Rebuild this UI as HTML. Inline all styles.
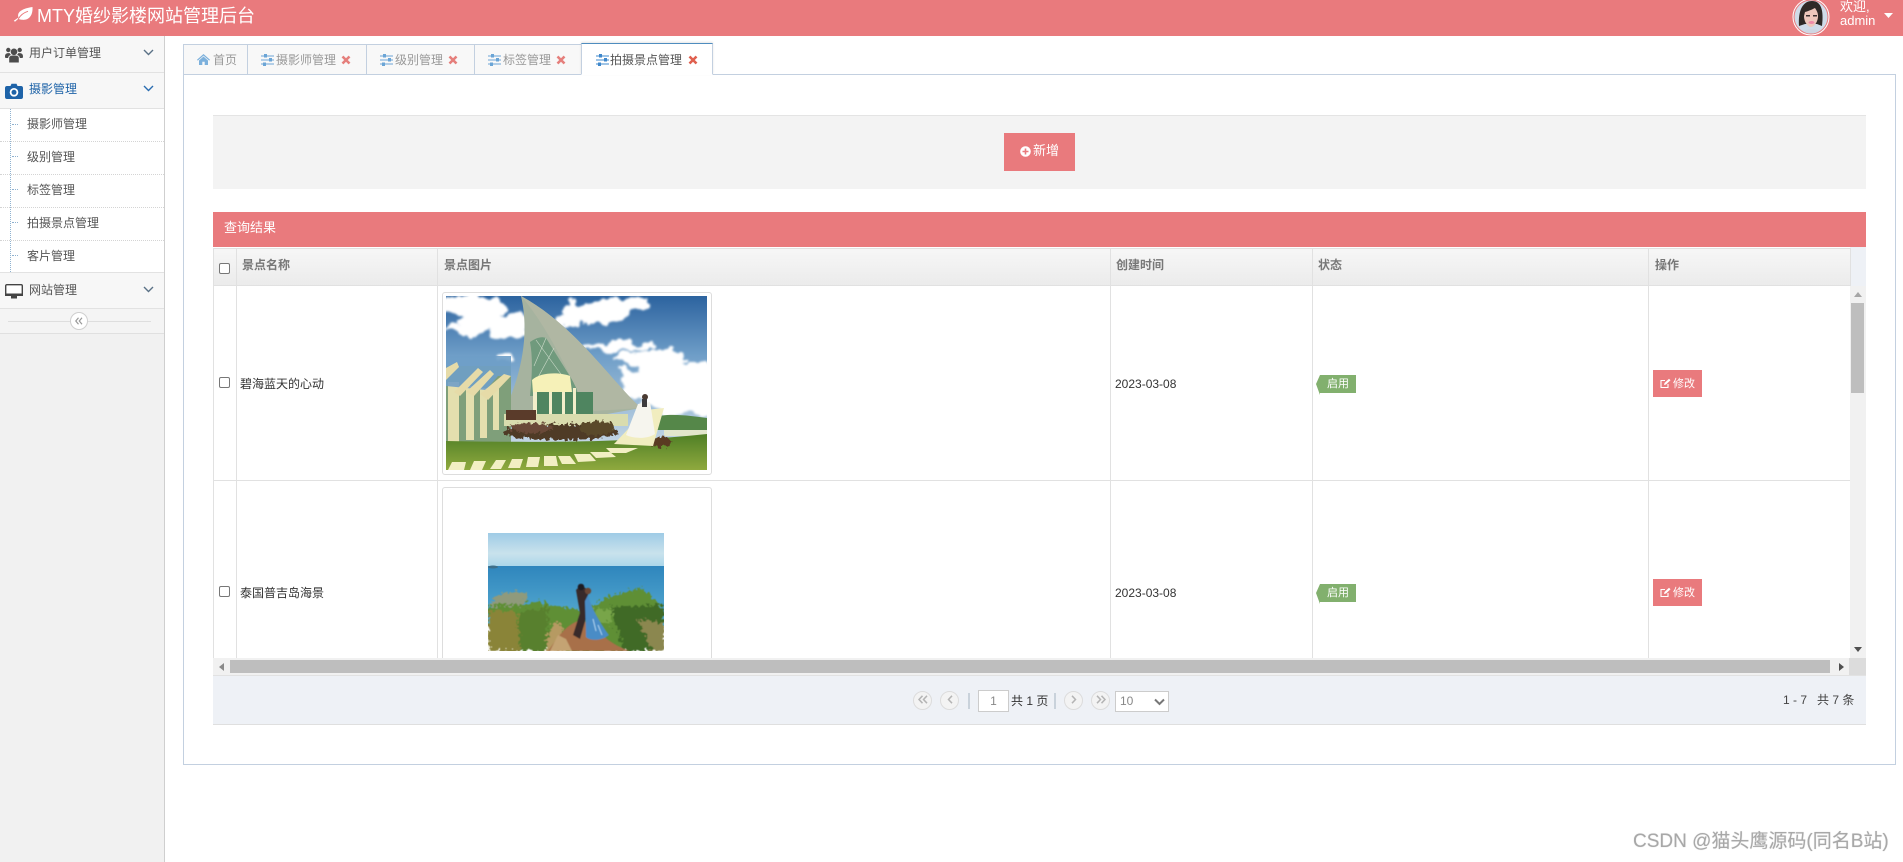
<!DOCTYPE html>
<html lang="zh-CN">
<head>
<meta charset="utf-8">
<title>MTY婚纱影楼网站管理后台</title>
<style>
html,body{margin:0;padding:0;width:1903px;height:862px;overflow:hidden;background:#fff}
body{font-family:"Liberation Sans","Noto Sans CJK SC",sans-serif;font-size:12px;color:#333;position:relative}
.a{position:absolute;box-sizing:border-box}
.t{position:absolute;white-space:nowrap;line-height:16px;height:16px}
svg{position:absolute;display:block}
.menu{left:0;width:164px;background:#f7f7f7;border-bottom:1px solid #e2e2e2}
.sub{left:0;width:164px;height:33px;background:#fff;border-bottom:1px dotted #d4d4d4}
.tab{top:44px;height:31px;background:#f8f8f8;border:1px solid #c3d0e0;border-left:none}
.vl{width:1px;background:#e1e1e1}
.hl{height:1px;background:#e1e1e1;left:213px;width:1637px}
.th{top:257px;color:#777;font-weight:bold}
.pg{width:19px;height:19px;border:1px solid #dcdcdc;border-radius:50%;background:#f3f3f3;top:690.5px}
</style>
</head>
<body>
<!-- header -->
<div class="a" style="left:0;top:0;width:1903px;height:36px;background:#e97a7d"></div>
<svg style="left:13px;top:6px" width="20" height="16" viewBox="0 0 20 16"><path d="M5.500 11.500C3.500 5.500 10 2.500 19.500 1 20 9.500 16 14.500 9 13.800 7.300 13.700 6.300 13.300 5.300 12.800L2 15.800 .8 14.800Z" fill="#fff"/><path d="M5.300 12.800C8 8.500 11 6.500 15 5.300" fill="none" stroke="#e97a7d" stroke-width="1"/></svg>
<div class="t" style="left:37px;top:4px;font-size:18px;line-height:24px;height:24px;color:#fff">MTY婚纱影楼网站管理后台</div>
<svg style="left:1792px;top:-2px" width="38" height="38" viewBox="0 0 38 38">
<defs><clipPath id="av"><circle cx="19" cy="19" r="16.500"/></clipPath></defs>
<circle cx="19" cy="19" r="18" fill="#e97a7d" stroke="#fff" stroke-width="1"/>
<g clip-path="url(#av)"><rect width="38" height="38" fill="#cfdbe8"/>
<path d="M7 28C6 12 11 3 20 3 29 3 32 12 30 28L25 26 13 26Z" fill="#2f2a27"/>
<path d="M13 14C17 13 21 11 23 10 25 13 26 15 26 18 26 24 22 29 19 29 16 29 12 24 12 18Z" fill="#eec8bc"/>
<rect x="14" y="17" width="4" height="1.500" fill="#3a3030"/><rect x="21" y="17" width="4" height="1.500" fill="#3a3030"/>
<ellipse cx="19.500" cy="24.500" rx="3" ry="1.500" fill="#ee8aa8"/>
<path d="M9 38C10 33 15 31 19 31 24 31 29 33 30 38Z" fill="#cfd6e2"/></g>
</svg>
<div class="t" style="left:1840px;top:-1px;color:#fff;font-size:13px">欢迎,</div>
<div class="t" style="left:1840px;top:13px;color:#fff;font-size:13px">admin</div>
<svg style="left:1884px;top:13px" width="10" height="6" viewBox="0 0 10 6"><path d="M0 0H9L4.500 5Z" fill="#fff"/></svg>

<!-- sidebar -->
<div class="a" style="left:0;top:36px;width:165px;height:826px;background:#f1f1f1;border-right:1px solid #cfcfcf"></div>
<div class="a menu" style="top:36px;height:37px"></div>
<div class="a menu" style="top:73px;height:36px"></div>
<div class="a sub" style="top:109px"></div>
<div class="a sub" style="top:142px"></div>
<div class="a sub" style="top:175px"></div>
<div class="a sub" style="top:208px"></div>
<div class="a sub" style="top:241px;height:32px;border-bottom:none"></div>
<div class="a menu" style="top:272px;height:37px;border-top:1px solid #e2e2e2"></div>
<div class="a" style="left:0;top:309px;width:164px;height:25px;background:#f4f4f4;border-bottom:1px solid #e0e0e0"></div>
<div class="a" style="left:10px;top:109px;width:0;height:163px;border-left:1px dotted #8fb2d0"></div>
<div class="a" style="left:12px;top:124px;width:6px;border-top:1px dotted #8fb2d0"></div>
<div class="a" style="left:12px;top:156px;width:6px;border-top:1px dotted #8fb2d0"></div>
<div class="a" style="left:12px;top:189px;width:6px;border-top:1px dotted #8fb2d0"></div>
<div class="a" style="left:12px;top:222px;width:6px;border-top:1px dotted #8fb2d0"></div>
<div class="a" style="left:12px;top:255px;width:6px;border-top:1px dotted #8fb2d0"></div>

<svg style="left:5px;top:47px" width="18" height="16" viewBox="0 0 18 16" fill="#4d4d4d"><circle cx="9" cy="4.800" r="3.300"/><circle cx="3.300" cy="3" r="2.200"/><circle cx="14.700" cy="3" r="2.200"/><path d="M4.200 15.500V11C4.200 9 6 8.500 9 8.500 12 8.500 13.800 9 13.800 11V15.500Z"/><path d="M0 9.500C0 6.500 2 6 4.800 6.200 5.200 7 5.500 7.500 6 8 3.800 8.500 3.200 9.800 3.200 11H.8C.3 11 0 10.400 0 9.500ZM18 9.500C18 6.500 16 6 13.200 6.200 12.800 7 12.500 7.500 12 8 14.200 8.500 14.800 9.800 14.800 11H17.200C17.700 11 18 10.400 18 9.500Z"/></svg>
<div class="t" style="left:29px;top:45px;color:#555">用户订单管理</div>
<svg style="left:143px;top:49px" width="11" height="7" viewBox="0 0 11 7"><path d="M1 1L5.500 5.500 10 1" fill="none" stroke="#5a7186" stroke-width="1.400"/></svg>

<svg style="left:5px;top:83px" width="18" height="16" viewBox="0 0 18 16"><path d="M2 3H5.500L6.500 .8H11.500L12.500 3H16C17.200 3 18 3.800 18 5V14C18 15.200 17.200 16 16 16H2C.8 16 0 15.200 0 14V5C0 3.800.8 3 2 3Z" fill="#1e63a8"/><circle cx="9" cy="9.300" r="4.300" fill="#fff"/><circle cx="9" cy="9.300" r="2.500" fill="#1e63a8"/></svg>
<div class="t" style="left:29px;top:81px;color:#1e63a8">摄影管理</div>
<svg style="left:143px;top:85px" width="11" height="7" viewBox="0 0 11 7"><path d="M1 1L5.500 5.500 10 1" fill="none" stroke="#2a6cb0" stroke-width="1.400"/></svg>

<div class="t" style="left:27px;top:116px;color:#555">摄影师管理</div>
<div class="t" style="left:27px;top:149px;color:#555">级别管理</div>
<div class="t" style="left:27px;top:182px;color:#555">标签管理</div>
<div class="t" style="left:27px;top:215px;color:#555">拍摄景点管理</div>
<div class="t" style="left:27px;top:248px;color:#555">客片管理</div>

<svg style="left:5px;top:284px" width="18" height="15" viewBox="0 0 18 15"><rect x=".7" y=".7" width="16.600" height="10.600" rx="1.200" fill="#fff" stroke="#444" stroke-width="1.400"/><rect x="0" y="9.500" width="18" height="2.500" fill="#444"/><rect x="6" y="12" width="6" height="2.500" fill="#444"/></svg>
<div class="t" style="left:29px;top:282px;color:#555">网站管理</div>
<svg style="left:143px;top:286px" width="11" height="7" viewBox="0 0 11 7"><path d="M1 1L5.500 5.500 10 1" fill="none" stroke="#5a7186" stroke-width="1.400"/></svg>

<div class="a" style="left:8px;top:321px;width:143px;height:1px;background:#dedede"></div>
<div class="a" style="left:70px;top:312px;width:18px;height:18px;border-radius:50%;background:#fff;border:1px solid #cfcfcf"></div>
<svg style="left:75px;top:317px" width="8" height="8" viewBox="0 0 8 8"><path d="M3.500 .8L.8 4 3.500 7.200M7 .8L4.300 4 7 7.200" fill="none" stroke="#999" stroke-width="1.200"/></svg>

<!-- content box and tabs -->
<div class="a" style="left:183px;top:74px;width:1713px;height:691px;background:#fff;border:1px solid #c3d0e0"></div>
<div class="a tab" style="left:183px;width:65px;border-left:1px solid #c3d0e0"></div>
<div class="a tab" style="left:248px;width:119px"></div>
<div class="a tab" style="left:367px;width:108px"></div>
<div class="a tab" style="left:475px;width:107px"></div>
<div class="a" style="left:581px;top:43px;width:132px;height:32px;background:#fff;border:1px solid #c3d0e0;border-top:1px solid #4f8dbf;border-bottom:1px solid #fff;box-shadow:0 -1px 2px rgba(0,0,0,.1)"></div>
<div class="a" style="left:183px;top:74px;width:398px;height:1px;background:#c3d0e0"></div>

<svg style="left:197px;top:54px" width="13" height="11" viewBox="0 0 13 11"><path d="M6.500 0L13 5.800 12.200 6.600 6.500 1.600.8 6.600 0 5.800ZM2 6.500L6.500 2.500 11 6.500V11H7.700V7.800H5.300V11H2Z" fill="#7cb0dc"/></svg>
<div class="t" style="left:213px;top:52px;color:#999">首页</div>

<svg style="left:261px;top:54px" width="13" height="12" viewBox="0 0 13 12" fill="#6ba5d6"><rect y="1.500" width="13" height="1"/><rect y="5.500" width="13" height="1"/><rect y="9.500" width="13" height="1"/><rect x="3" y="0" width="3" height="3.500"/><rect x="8" y="4" width="3" height="3.500"/><rect x="2" y="8.500" width="3" height="3.500"/></svg>
<div class="t" style="left:276px;top:52px;color:#999">摄影师管理</div>
<svg style="left:341px;top:55px" width="10" height="10" viewBox="0 0 10 10"><path d="M1.500 1.500L8.500 8.500M8.500 1.500L1.500 8.500" stroke="#e57f7c" stroke-width="2.600"/></svg>

<svg style="left:380px;top:54px" width="13" height="12" viewBox="0 0 13 12" fill="#6ba5d6"><rect y="1.500" width="13" height="1"/><rect y="5.500" width="13" height="1"/><rect y="9.500" width="13" height="1"/><rect x="3" y="0" width="3" height="3.500"/><rect x="8" y="4" width="3" height="3.500"/><rect x="2" y="8.500" width="3" height="3.500"/></svg>
<div class="t" style="left:395px;top:52px;color:#999">级别管理</div>
<svg style="left:448px;top:55px" width="10" height="10" viewBox="0 0 10 10"><path d="M1.500 1.500L8.500 8.500M8.500 1.500L1.500 8.500" stroke="#e57f7c" stroke-width="2.600"/></svg>

<svg style="left:488px;top:54px" width="13" height="12" viewBox="0 0 13 12" fill="#6ba5d6"><rect y="1.500" width="13" height="1"/><rect y="5.500" width="13" height="1"/><rect y="9.500" width="13" height="1"/><rect x="3" y="0" width="3" height="3.500"/><rect x="8" y="4" width="3" height="3.500"/><rect x="2" y="8.500" width="3" height="3.500"/></svg>
<div class="t" style="left:503px;top:52px;color:#999">标签管理</div>
<svg style="left:556px;top:55px" width="10" height="10" viewBox="0 0 10 10"><path d="M1.500 1.500L8.500 8.500M8.500 1.500L1.500 8.500" stroke="#e57f7c" stroke-width="2.600"/></svg>

<svg style="left:596px;top:54px" width="13" height="12" viewBox="0 0 13 12" fill="#3f88cc"><rect y="1.500" width="13" height="1"/><rect y="5.500" width="13" height="1"/><rect y="9.500" width="13" height="1"/><rect x="3" y="0" width="3" height="3.500"/><rect x="8" y="4" width="3" height="3.500"/><rect x="2" y="8.500" width="3" height="3.500"/></svg>
<div class="t" style="left:610px;top:52px;color:#555">拍摄景点管理</div>
<svg style="left:688px;top:55px" width="10" height="10" viewBox="0 0 10 10"><path d="M1.500 1.500L8.500 8.500M8.500 1.500L1.500 8.500" stroke="#e0604f" stroke-width="2.600"/></svg>

<!-- filter area -->
<div class="a" style="left:213px;top:115px;width:1653px;height:74px;background:#f3f3f3;border-top:1px solid #e4e4e4"></div>
<div class="a" style="left:1004px;top:133px;width:71px;height:38px;background:#e97a7d"></div>
<svg style="left:1020px;top:146px" width="11" height="11" viewBox="0 0 11 11"><circle cx="5.500" cy="5.500" r="5.300" fill="#fff"/><path d="M5.500 2.500V8.500M2.500 5.500H8.500" stroke="#e97a7d" stroke-width="1.600"/></svg>
<div class="t" style="left:1033px;top:143px;font-size:13px;color:#fff">新增</div>

<!-- table -->
<div class="a" style="left:213px;top:212px;width:1653px;height:35px;background:#e97a7d"></div>
<div class="t" style="left:224px;top:220px;font-size:13px;color:#fff">查询结果</div>
<div class="a" style="left:1850px;top:247px;width:16px;height:39px;background:#eef1f6"></div>
<div class="a" style="left:213px;top:248px;width:1637px;height:38px;background:linear-gradient(#f7f7f7,#ebebeb)"></div>
<div class="a hl" style="top:248px"></div>
<div class="a hl" style="top:285px"></div>
<div class="a hl" style="top:480px"></div>
<div class="a vl" style="left:213px;top:248px;height:410px"></div>
<div class="a vl" style="left:236px;top:248px;height:410px"></div>
<div class="a vl" style="left:437px;top:248px;height:410px"></div>
<div class="a vl" style="left:1110px;top:248px;height:410px"></div>
<div class="a vl" style="left:1312px;top:248px;height:410px"></div>
<div class="a vl" style="left:1648px;top:248px;height:410px"></div>
<div class="a vl" style="left:1850px;top:248px;height:38px"></div>

<div class="a" style="left:219px;top:263px;width:11px;height:11px;border:1px solid #777;border-radius:2px;background:#fff"></div>
<div class="t th" style="left:242px">景点名称</div>
<div class="t th" style="left:444px">景点图片</div>
<div class="t th" style="left:1116px">创建时间</div>
<div class="t th" style="left:1318px">状态</div>
<div class="t th" style="left:1655px">操作</div>

<!-- row 1 -->
<div class="a" style="left:219px;top:377px;width:11px;height:11px;border:1px solid #777;border-radius:2px;background:#fff"></div>
<div class="t" style="left:240px;top:376px">碧海蓝天的心动</div>
<div class="a" style="left:442px;top:292px;width:270px;height:183px;border:1px solid #ddd;border-radius:3px;background:#fff"></div>
<svg style="left:446px;top:296px" width="261" height="174" viewBox="0 0 261 174">
<defs>
<linearGradient id="sk" x1="0" y1="0" x2="0" y2="1"><stop offset="0" stop-color="#2c639f"/><stop offset=".4" stop-color="#6f9ec8"/><stop offset="1" stop-color="#c6d8e6"/></linearGradient>
<linearGradient id="gr" x1="0" y1="0" x2="0" y2="1"><stop offset="0" stop-color="#4f7f26"/><stop offset="1" stop-color="#8fa93e"/></linearGradient>
<filter id="cl" x="-10%" y="-10%" width="120%" height="120%"><feTurbulence type="fractalNoise" baseFrequency=".06" numOctaves="3" seed="4"/><feDisplacementMap in="SourceGraphic" scale="22" xChannelSelector="R" yChannelSelector="G"/><feGaussianBlur stdDeviation="1"/></filter>
<filter id="bu" x="-5%" y="-20%" width="110%" height="140%"><feTurbulence type="fractalNoise" baseFrequency=".25" numOctaves="2" seed="7"/><feDisplacementMap in="SourceGraphic" scale="9" xChannelSelector="R" yChannelSelector="G"/></filter>
<filter id="b2"><feGaussianBlur stdDeviation=".35"/></filter>
<clipPath id="c1"><rect width="261" height="174"/></clipPath>
</defs>
<g clip-path="url(#c1)">
<rect width="261" height="150" fill="url(#sk)"/>
<g fill="#fff" filter="url(#cl)">
<ellipse cx="30" cy="10" rx="36" ry="10"/><ellipse cx="45" cy="26" rx="34" ry="10"/><ellipse cx="62" cy="36" rx="22" ry="5"/><ellipse cx="12" cy="34" rx="14" ry="4"/>
<ellipse cx="150" cy="16" rx="34" ry="12"/><ellipse cx="180" cy="8" rx="22" ry="7"/><ellipse cx="120" cy="26" rx="14" ry="5"/>
<ellipse cx="170" cy="50" rx="38" ry="4"/><ellipse cx="205" cy="62" rx="36" ry="8"/><ellipse cx="225" cy="82" rx="50" ry="18"/><ellipse cx="235" cy="104" rx="40" ry="16"/><ellipse cx="195" cy="95" rx="22" ry="10"/><ellipse cx="60" cy="62" rx="12" ry="4"/>
</g>
<g filter="url(#b2)">
<!-- sail -->
<path d="M75 0C82 30 80 70 57 118L150 120 195 112C165 85 130 30 75 0Z" fill="#a6b39f"/>
<path d="M84 46C90 42 95 40 100 42L130 90 132 100 84 100C86 80 87 62 84 46Z" fill="#6f9a7d"/>
<path d="M90 44L120 85M100 42L88 70M108 52L90 85" stroke="#cfdccb" stroke-width=".6" fill="none"/>
<path d="M75 0C92 20 108 45 134 100L148 115 195 112C165 85 130 30 75 0Z" fill="#b0b7a3"/>
<path d="M86 84C94 76 114 76 124 80L126 96 87 97Z" fill="#f6f1b8"/>
<rect x="87" y="96" width="60" height="22" fill="#4f8560"/>
<rect x="87" y="96" width="4" height="23" fill="#f2eeca"/><rect x="103" y="96" width="3" height="23" fill="#f2eeca"/><rect x="116" y="96" width="3" height="23" fill="#f2eeca"/><rect x="127" y="92" width="3" height="27" fill="#f2eeca"/>
<!-- pergola -->
<rect x="0" y="70" width="65" height="76" fill="#7f9f7a"/>
<g fill="#e4dfae"><rect x="2" y="86" width="11" height="60"/><rect x="20" y="90" width="8" height="54"/><rect x="34" y="92" width="7" height="50"/><rect x="47" y="92" width="6" height="42"/></g>
<path d="M0 60H65V80H52L40 94 0 90Z" fill="#6f9ec8" fill-opacity=".9"/>
<g fill="#e6dba8"><path d="M0 72L11 66 13 71 0 84Z"/><path d="M8 96L32 72 37 76 14 100Z"/><path d="M20 96L44 74 48 78 28 100Z"/><path d="M34 98L58 78 65 80 42 104Z"/></g>
<rect x="58" y="118" width="124" height="12" fill="#d9dcae"/>
<rect x="60" y="114" width="30" height="10" fill="#5a3b2a"/>
<!-- right hill -->
<path d="M205 122C222 116 245 120 261 122V134H205Z" fill="#54874a"/>
<rect x="218" y="134" width="43" height="6" fill="#e2e6cc"/>
</g>
<path d="M0 145C60 146 170 148 261 138V174H0Z" fill="url(#gr)"/>
<g filter="url(#bu)"><ellipse cx="115" cy="136" rx="58" ry="8" fill="#4f3a26"/><ellipse cx="85" cy="132" rx="22" ry="5" fill="#6b4a38"/><ellipse cx="150" cy="132" rx="18" ry="7" fill="#5a4a2a"/><ellipse cx="215" cy="146" rx="10" ry="5" fill="#5a3b22"/></g>
<g filter="url(#b2)">
<path d="M168 148L200 114 218 112 207 150Z" fill="#f1edbf"/>
<path d="M192 108L204 106 209 138C200 144 186 142 180 139Z" fill="#f6f5ee"/>
<circle cx="199" cy="101" r="3" fill="#4b3b33"/><rect x="196" y="103" width="5" height="8" fill="#3e3a3e"/>
<g fill="#f2efc3"><path d="M2 174L6 166H20L18 174Z"/><path d="M24 174L28 165H40L36 174Z"/><path d="M44 173L50 164H60L55 173Z"/><path d="M62 172L66 163H77L74 172Z"/><path d="M80 171L82 161H94L92 171Z"/><path d="M98 170L98 160H110L112 170Z"/><path d="M116 168L112 160H124L130 168Z"/><path d="M132 166L128 158H144L150 165Z"/><path d="M150 162L144 156H164L170 161Z"/><path d="M165 157L160 152H192L180 157Z"/></g>
</g>
</g>
</svg>
<div class="t" style="left:1115px;top:376px">2023-03-08</div>
<svg style="left:1316px;top:375px" width="41" height="20" viewBox="0 0 41 20"><path d="M4 0H40V18H4V20L0 9Z" fill="#82b06e"/></svg>
<div class="t" style="left:1327px;top:376px;color:#fff;font-size:11px">启用</div>
<div class="a" style="left:1653px;top:370px;width:49px;height:27px;background:#e97a7d"></div>
<svg style="left:1660px;top:378px" width="11" height="11" viewBox="0 0 11 11"><path d="M8 6V9.500H1V2.500H5" fill="none" stroke="#fff" stroke-width="1.100"/><path d="M4 7L4.500 5 9 .8 10.500 2.200 6 6.500Z" fill="#fff"/></svg>
<div class="t" style="left:1673px;top:376px;color:#fff;font-size:11px">修改</div>

<!-- row 2 -->
<div class="a" style="left:219px;top:586px;width:11px;height:11px;border:1px solid #777;border-radius:2px;background:#fff"></div>
<div class="t" style="left:240px;top:585px">泰国普吉岛海景</div>
<div class="a" style="left:442px;top:487px;width:270px;height:183px;border:1px solid #ddd;border-radius:3px;background:#fff"></div>
<svg style="left:488px;top:533px" width="176" height="118" viewBox="0 0 176 118">
<defs>
<linearGradient id="s2" x1="0" y1="0" x2="0" y2="1"><stop offset="0" stop-color="#9fcbe6"/><stop offset=".6" stop-color="#c9e2ec"/><stop offset="1" stop-color="#a9d6ea"/></linearGradient>
<linearGradient id="se" x1="0" y1="0" x2="0" y2="1"><stop offset="0" stop-color="#2f86bd"/><stop offset="1" stop-color="#5aaed2"/></linearGradient>
<filter id="fo" x="-5%" y="-10%" width="110%" height="120%"><feTurbulence type="fractalNoise" baseFrequency=".3" numOctaves="2" seed="3"/><feDisplacementMap in="SourceGraphic" scale="12" xChannelSelector="R" yChannelSelector="G"/><feGaussianBlur stdDeviation=".4"/></filter>
<filter id="b3"><feGaussianBlur stdDeviation=".5"/></filter>
<clipPath id="c2"><rect width="176" height="118"/></clipPath>
</defs>
<g clip-path="url(#c2)">
<rect width="176" height="34" fill="url(#s2)"/>
<rect y="33" width="176" height="60" fill="url(#se)"/>
<ellipse cx="5" cy="34" rx="5" ry="1.500" fill="#3d6f8a"/>
<g filter="url(#fo)">
<path d="M4 66C12 58 30 56 38 62L36 76H4Z" fill="#8f9a7c"/>
<path d="M0 72L30 72 50 68 60 72 85 76 100 76C115 66 130 58 155 56 165 64 172 72 176 78V118H0Z" fill="#5f8f35"/>
<path d="M0 78H28L36 118H0Z" fill="#8a8438"/>
<path d="M30 80L60 74 58 118H32Z" fill="#59802f"/>
<path d="M122 74L176 72V118H136Z" fill="#3f6a27"/>
<path d="M150 86L176 90V118H164Z" fill="#8b8750"/>
<path d="M104 76L125 76 122 90 108 90Z" fill="#78a548"/>
<path d="M60 100L68 88 76 96 74 118H58Z" fill="#b69a62"/>
</g>
<g filter="url(#b3)">
<path d="M60 118C70 104 78 92 90 88L105 90C112 102 124 112 142 118Z" fill="#a86f48"/>
<path d="M62 118L70 102 78 106 84 118Z" fill="#c4a373"/>
<path d="M88 57C92 52 99 53 100 60L100 78 92 106 85 102 92 80Z" fill="#372c2c"/>
<circle cx="93" cy="54" r="3.300" fill="#1f1c20"/>
<circle cx="100" cy="58" r="3.200" fill="#6b4636"/>
<path d="M100 62C103 74 112 90 121 102 114 108 102 108 98 104 98 90 97 76 97 68Z" fill="#4a8cc6"/>
<path d="M105 86L108 98M110 92L114 102" stroke="#a9d2ef" stroke-width="1" fill="none"/>
</g>
</g>
</svg>
<div class="t" style="left:1115px;top:585px">2023-03-08</div>
<svg style="left:1316px;top:584px" width="41" height="20" viewBox="0 0 41 20"><path d="M4 0H40V18H4V20L0 9Z" fill="#82b06e"/></svg>
<div class="t" style="left:1327px;top:585px;color:#fff;font-size:11px">启用</div>
<div class="a" style="left:1653px;top:579px;width:49px;height:27px;background:#e97a7d"></div>
<svg style="left:1660px;top:587px" width="11" height="11" viewBox="0 0 11 11"><path d="M8 6V9.500H1V2.500H5" fill="none" stroke="#fff" stroke-width="1.100"/><path d="M4 7L4.500 5 9 .8 10.500 2.200 6 6.500Z" fill="#fff"/></svg>
<div class="t" style="left:1673px;top:585px;color:#fff;font-size:11px">修改</div>

<!-- scrollbars -->
<div class="a" style="left:1850px;top:286px;width:16px;height:372px;background:#f1f1f1"></div>
<div class="a" style="left:1851px;top:303px;width:13px;height:90px;background:#bebebe"></div>
<svg style="left:1854px;top:292px" width="8" height="5" viewBox="0 0 8 5"><path d="M4 0L8 5H0Z" fill="#a6a6a6"/></svg>
<svg style="left:1854px;top:647px" width="8" height="5" viewBox="0 0 8 5"><path d="M4 5L8 0H0Z" fill="#505050"/></svg>
<div class="a" style="left:213px;top:658px;width:1636px;height:17px;background:#f1f1f1"></div>
<div class="a" style="left:230px;top:660px;width:1600px;height:13px;background:#bebebe"></div>
<svg style="left:219px;top:663px" width="5" height="8" viewBox="0 0 5 8"><path d="M0 4L5 0V8Z" fill="#8a8a8a"/></svg>
<svg style="left:1839px;top:663px" width="5" height="8" viewBox="0 0 5 8"><path d="M5 4L0 0V8Z" fill="#505050"/></svg>
<div class="a" style="left:1849px;top:658px;width:17px;height:17px;background:#dcdcdc"></div>

<!-- pagination -->
<div class="a" style="left:213px;top:675px;width:1653px;height:50px;background:#eef1f6;border-top:1px solid #e2e2e2;border-bottom:1px solid #dfdfdf"></div>
<div class="a pg" style="left:913px"></div>
<svg style="left:918px;top:695px" width="10" height="9" viewBox="0 0 10 9"><path d="M4.500 .8L1 4.500 4.500 8.200M9 .8L5.500 4.500 9 8.200" fill="none" stroke="#b4b4b4" stroke-width="1.500"/></svg>
<div class="a pg" style="left:940px"></div>
<svg style="left:947px;top:695px" width="6" height="9" viewBox="0 0 6 9"><path d="M5 .8L1.500 4.500 5 8.200" fill="none" stroke="#b4b4b4" stroke-width="1.500"/></svg>
<div class="a" style="left:968px;top:693px;width:2px;height:16px;background:#c9d2db"></div>
<div class="a" style="left:978px;top:690px;width:31px;height:22px;background:#fff;border:1px solid #ccc"></div>
<div class="t" style="left:978px;top:693px;width:31px;text-align:center;color:#888">1</div>
<div class="t" style="left:1011px;top:693px;color:#333">共 1 页</div>
<div class="a" style="left:1054px;top:693px;width:2px;height:16px;background:#c9d2db"></div>
<div class="a pg" style="left:1064px"></div>
<svg style="left:1071px;top:695px" width="6" height="9" viewBox="0 0 6 9"><path d="M1 .8L4.500 4.500 1 8.200" fill="none" stroke="#b4b4b4" stroke-width="1.500"/></svg>
<div class="a pg" style="left:1091px"></div>
<svg style="left:1096px;top:695px" width="10" height="9" viewBox="0 0 10 9"><path d="M1 .8L4.500 4.500 1 8.200M5.500 .8L9 4.500 5.500 8.200" fill="none" stroke="#b4b4b4" stroke-width="1.500"/></svg>
<div class="a" style="left:1115px;top:691px;width:54px;height:21px;background:#fff;border:1px solid #ccc"></div>
<div class="t" style="left:1120px;top:693px;color:#888">10</div>
<svg style="left:1154px;top:698px" width="11" height="8" viewBox="0 0 11 8"><path d="M1 1.500L5.500 6 10 1.500" fill="none" stroke="#777" stroke-width="2"/></svg>
<div class="t" style="left:1783px;top:692px;color:#444">1 - 7</div>
<div class="t" style="left:1817px;top:692px;color:#444">共 7 条</div>

<!-- watermark -->
<div class="t" style="left:1633px;top:830px;height:24px;line-height:24px;font-size:19px;color:#a8a8a8;text-shadow:0 0 1px #ccc">CSDN @猫头鹰源码(同名B站)</div>
</body>
</html>
